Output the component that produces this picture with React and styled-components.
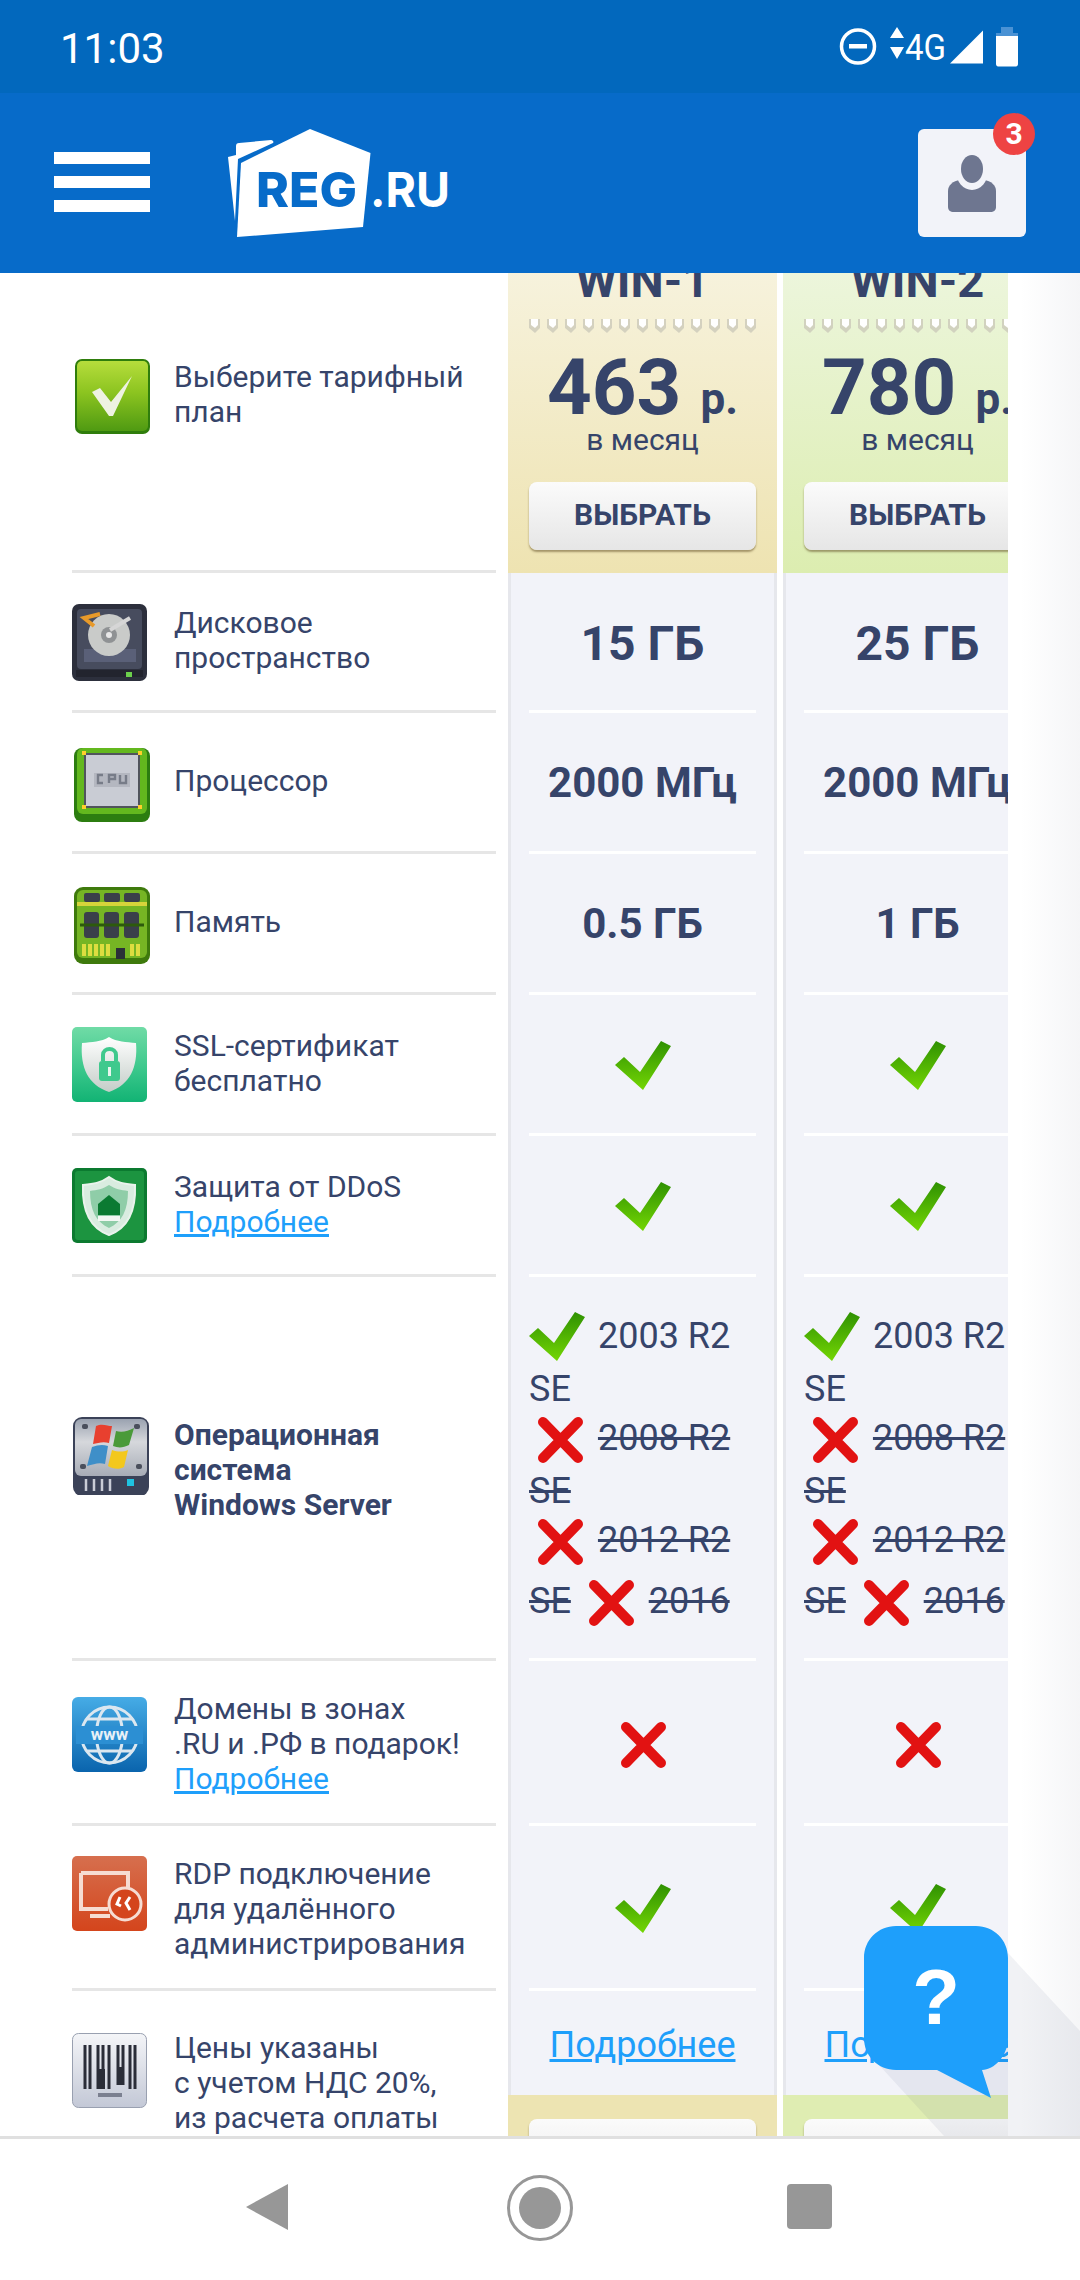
import React from "react";
import styled, { createGlobalStyle } from "styled-components";

const Global = createGlobalStyle`
  html, body { margin: 0; padding: 0; background: #fff; }
  body { font-family: Roboto, "Liberation Sans", sans-serif; color: #36446a; }
  * { box-sizing: border-box; }
`;

const Page = styled.div`
  width: 1080px;
  height: 2280px;
  display: flex;
  flex-direction: column;
  overflow: hidden;
`;

const StatusBar = styled.div`
  height: 93px;
  flex-shrink: 0;
  background: #0268bd;
  display: flex;
  align-items: center;
  padding: 0 60px 0 60px;
  color: #fff;
`;

const Clock = styled.div`
  font-size: 42px;
  line-height: 93px;
  padding-top: 3px;
  flex: 1;
`;

const StatusIcons = styled.svg`
  width: 182px;
  height: 42px;
  display: block;
  margin-top: -1px;
`;

const Header = styled.div`
  height: 180px;
  flex-shrink: 0;
  background: #076bc9;
  display: flex;
  align-items: center;
  padding: 0 54px;
  position: relative;
  z-index: 3;
`;

const Burger = styled.div`
  width: 96px;
  display: flex;
  flex-direction: column;
  gap: 12px;
  margin-top: -3px;
  margin-right: 78px;
  span {
    height: 12px;
    background: #fff;
  }
`;

const Logo = styled.svg`
  width: 224px;
  height: 112px;
  display: block;
`;

const ProfileButton = styled.div`
  width: 108px;
  height: 108px;
  margin-left: auto;
  background: #f2f3f9;
  border-radius: 6px;
  position: relative;
  display: flex;
  align-items: center;
  justify-content: center;
`;

const Badge = styled.div`
  position: absolute;
  top: -16px;
  right: -9px;
  width: 42px;
  height: 42px;
  border-radius: 50%;
  background: #ee4343;
  color: #fff;
  font-size: 30px;
  font-weight: 700;
  line-height: 42px;
  text-align: center;
`;

const Viewport = styled.div`
  flex: 1;
  position: relative;
  overflow: hidden;
  background: #fff;
`;

const Table = styled.div`
  width: 1008px;
  margin-top: -52px;
  padding-left: 72px;
  overflow: hidden;
`;

const Row = styled.div`
  display: flex;
  height: ${(p) => p.$h}px;
`;

const LabelCell = styled.div`
  width: 424px;
  flex-shrink: 0;
  margin-right: 6px;
  display: flex;
  align-items: ${(p) => (p.$top ? "flex-start" : "center")};
  padding-top: ${(p) => (p.$top ? "39px" : "0")};
  border-bottom: ${(p) => (p.$top ? "none" : "3px solid #e6e6e6")};
`;

const LabelBlock = styled.div`
  display: flex;
  align-items: flex-start;
  gap: 24px;
  margin-top: 3px;
`;

const IconBox = styled.div`
  width: 78px;
  height: 78px;
  flex-shrink: 0;
  margin-top: ${(p) => p.$drop || 0}px;
  svg {
    display: block;
    width: 78px;
    height: 78px;
  }
`;

const Label = styled.div`
  font-size: 30px;
  line-height: 35px;
  min-height: 72px;
  display: flex;
  flex-direction: column;
  justify-content: center;
  white-space: nowrap;
  font-weight: ${(p) => (p.$bold ? 700 : 400)};
`;

const LastLabel = styled(Label)`
  margin-top: -3px;
`;

const TextLink = styled.a`
  color: #1e9ffb;
  text-decoration: underline;
  font-size: ${(p) => (p.$big ? "36px" : "inherit")};
`;

const Plan = styled.div`
  width: 269px;
  flex-shrink: 0;
  margin-left: 6px;
  padding: 35px 21px 0;
  display: flex;
  flex-direction: column;
  align-items: center;
  background: ${(p) =>
    p.$tone === "green"
      ? "linear-gradient(#eff7e3, #dcedb0)"
      : "linear-gradient(#f8f5e4, #eee3b1)"};
`;

const PlanName = styled.div`
  font-size: 47px;
  line-height: 50px;
  font-weight: 700;
  white-space: nowrap;
`;

const Dots = styled.svg`
  display: block;
  width: 227px;
  height: 15px;
  margin-top: 12px;
  flex-shrink: 0;
`;

const Price = styled.div`
  margin-top: 17px;
  font-size: 78px;
  line-height: 76px;
  font-weight: 700;
  white-space: nowrap;
  small {
    font-size: 44px;
    line-height: 0;
  }
`;

const PerMonth = styled.div`
  font-size: 30px;
  line-height: 28px;
`;

const ChooseButton = styled.div`
  width: 227px;
  height: 68px;
  flex-shrink: 0;
  margin-top: ${(p) => p.$mt || 28}px;
  border-radius: 8px;
  background: linear-gradient(#fbfbfb, #e6e6e6);
  box-shadow: 0 2px 2px rgba(90, 70, 30, 0.5);
  font-size: 30px;
  font-weight: 700;
  line-height: 66px;
  text-align: center;
`;

const Cell = styled.div`
  width: 269px;
  flex-shrink: 0;
  margin-left: 6px;
  padding: 0 18px;
  background: #f2f3f9;
  border-left: 3px solid #e6e7ec;
  border-right: 3px solid #e6e7ec;
`;

const CellInner = styled.div`
  height: 100%;
  position: relative;
  display: flex;
  align-items: center;
  justify-content: center;
  border-bottom: 3px solid #e4e5ea;
  font-size: ${(p) => p.$size || 42}px;
  font-weight: 700;
  white-space: nowrap;
  padding-top: ${(p) => (p.$size ? "4px" : "0")};
  &::after {
    content: "";
    position: absolute;
    left: 0;
    right: 0;
    top: 100%;
    height: 3px;
    background: #fff;
    z-index: 1;
  }
  > svg {
    margin-top: 4px;
  }
`;

const OsCellInner = styled(CellInner)`
  display: block;
  white-space: normal;
  padding-top: 35px;
  font-size: 36px;
  font-weight: 400;
  line-height: 49px;
  > svg {
    margin: 0 4px 3px 0;
    vertical-align: -17px;
  }
`;

const MarkSvg = styled.svg`
  display: inline-block;
  width: 56px;
  height: 50px;
  vertical-align: -12px;
`;

const LastColumn = styled.div`
  width: 269px;
  flex-shrink: 0;
  margin-left: 6px;
  display: flex;
  flex-direction: column;
`;

const LastBody = styled.div`
  height: 104px;
  flex-shrink: 0;
  background: #f2f3f9;
  border-left: 3px solid #e6e7ec;
  border-right: 3px solid #e6e7ec;
  display: flex;
  align-items: center;
  justify-content: center;
  padding-top: 3px;
  white-space: nowrap;
`;

const LastFoot = styled.div`
  flex: 1;
  padding-left: 21px;
  background: ${(p) => (p.$tone === "green" ? "#dfedb2" : "#ede4b2")};
  overflow: hidden;
`;

const EdgeFade = styled.div`
  position: absolute;
  top: 0;
  bottom: 0;
  right: 0;
  width: 60px;
  background: linear-gradient(to right, rgba(60, 70, 100, 0), rgba(60, 70, 100, 0.05));
  pointer-events: none;
`;

const LongShadow = styled.svg`
  position: absolute;
  z-index: 2;
  left: 860px;
  top: 1660px;
  width: 220px;
  height: 203px;
  pointer-events: none;
`;

const HelpBubble = styled.div`
  position: absolute;
  z-index: 2;
  left: 864px;
  top: 1653px;
  width: 144px;
  height: 172px;
  svg {
    display: block;
    width: 144px;
    height: 172px;
  }
`;

const HelpMark = styled.span`
  position: absolute;
  left: 0;
  top: 28px;
  width: 144px;
  text-align: center;
  color: #fff;
  font-family: "Liberation Sans", Arial, sans-serif;
  font-size: 78px;
  font-weight: 700;
  line-height: 86px;
`;

const NavBar = styled.div`
  height: 144px;
  flex-shrink: 0;
  background: #fff;
  border-top: 3px solid #e0e0e0;
  display: flex;
  align-items: center;
  justify-content: center;
  gap: 206px;
  padding-bottom: 3px;
`;

const NavSlot = styled.svg`
  width: 66px;
  height: 66px;
  display: block;
`;

const Check = ({ id }) => (
  <MarkSvg viewBox="0 0 56 50">
    <defs>
      <linearGradient id={id} x1="0" y1="0" x2="0" y2="1">
        <stop offset="0" stopColor="#2f9102" />
        <stop offset="1" stopColor="#74d604" />
      </linearGradient>
    </defs>
    <path d="M0 24 L9 16 L25 31 L46 0 L56 5 L28 49 Z" fill={`url(#${id})`} />
  </MarkSvg>
);

const Cross = ({ className }) => (
  <MarkSvg className={className} viewBox="0 0 56 50">
    <path d="M14 8 L49 44 M49 8 L14 44" stroke="#e21212" strokeWidth="10" strokeLinecap="round" />
  </MarkSvg>
);

// the last cross of the OS list sits on a taller line
const LastCross = styled(Cross)`
  margin-top: 8px !important;
`;

const CellCross = styled(Cross)`
  margin-left: -6px;
`;

const DotStrip = ({ id }) => (
  <Dots viewBox="0 0 227 15">
    <defs>
      <pattern id={id} width="18" height="15" patternUnits="userSpaceOnUse">
        <path d="M0 1 H11 V10 L6 15 L0 10 Z" fill="#c9c7b8" opacity="0.75" />
        <path d="M2 1 H9 V7 L6 10 L2 7 Z" fill="#fff" />
      </pattern>
    </defs>
    <rect width="227" height="15" fill={`url(#${id})`} />
  </Dots>
);

const CheckIcon = () => (
  <svg viewBox="0 0 78 78">
    <defs>
      <linearGradient id="ic1" x1="0" y1="0" x2="0" y2="1">
        <stop offset="0" stopColor="#b6dd3c" />
        <stop offset="0.45" stopColor="#8cc420" />
        <stop offset="1" stopColor="#4f9a12" />
      </linearGradient>
    </defs>
    <rect x="3" y="1" width="75" height="75" rx="7" fill="#2f7d0c" />
    <rect x="5" y="3" width="71" height="70" rx="5" fill="url(#ic1)" />
    <path d="M20 34 L28 30 L39 44 L60 18 L41 58 L37 58 Z" fill="#eef2e2" />
  </svg>
);

const DiskIcon = () => (
  <svg viewBox="0 0 78 78">
    <rect x="0" y="0" width="75" height="77" rx="7" fill="#2c2f3c" />
    <rect x="5" y="5" width="65" height="60" rx="4" fill="#474c5e" />
    <path d="M12 45 H64 V58 H12 Z" fill="#5a6078" />
    <rect x="4" y="66" width="67" height="7" fill="#22242e" />
    <rect x="54" y="68" width="6" height="5" fill="#6cd04c" />
    <circle cx="37" cy="31" r="21" fill="#c9cbc9" />
    <circle cx="37" cy="31" r="8" fill="#8f9294" />
    <circle cx="37" cy="31" r="3" fill="#e8e8e8" />
    <path d="M38 26 L58 14" stroke="#d6d6d6" strokeWidth="4" />
    <path d="M28 10 L12 14 L22 22" stroke="#e89a2a" strokeWidth="4" fill="none" />
  </svg>
);

const CpuIcon = () => (
  <svg viewBox="0 0 78 78">
    <rect x="2" y="3" width="76" height="74" rx="8" fill="#2c7d10" />
    <rect x="5" y="3" width="70" height="66" rx="6" fill="#63b81e" />
    <rect x="12" y="8" width="56" height="55" rx="2" fill="#50545c" />
    <rect x="14" y="10" width="52" height="51" fill="#c9ccd4" />
    <rect x="22" y="28" width="36" height="14" fill="#b4b7c0" />
    <g fill="none" stroke="#777c88" strokeWidth="2.4">
      <path d="M31 30 H26 V38 H31" />
      <path d="M37 38 V30 H43 V34 H37" />
      <path d="M48 30 V38 H54 V30" />
    </g>
    <g fill="#ffcf2a">
      <rect x="10" y="6" width="4" height="4" />
      <rect x="66" y="6" width="4" height="4" />
      <rect x="10" y="60" width="4" height="4" />
      <rect x="66" y="60" width="4" height="4" />
    </g>
  </svg>
);

const RamIcon = () => (
  <svg viewBox="0 0 78 78">
    <rect x="2" y="1" width="76" height="77" rx="9" fill="#3e7a0c" />
    <rect x="5" y="4" width="70" height="68" rx="6" fill="#76b524" />
    <rect x="5" y="16" width="70" height="4" fill="#d7d43a" />
    <g fill="#3a3f4a">
      <rect x="12" y="7" width="16" height="9" rx="2" />
      <rect x="32" y="7" width="16" height="9" rx="2" />
      <rect x="52" y="7" width="16" height="9" rx="2" />
      <rect x="12" y="26" width="15" height="26" rx="3" />
      <rect x="32" y="26" width="15" height="26" rx="3" />
      <rect x="52" y="26" width="15" height="26" rx="3" />
    </g>
    <path d="M8 39 H72" stroke="#2d5a0c" strokeWidth="3" />
    <path d="M12 58 V70 M18 58 V70 M24 58 V70 M30 58 V70 M36 58 V70 M60 58 V70 M66 58 V70" stroke="#dddd40" strokeWidth="4" />
    <rect x="44" y="62" width="9" height="11" fill="#2b2f38" />
  </svg>
);

const SslIcon = () => (
  <svg viewBox="0 0 78 78">
    <defs>
      <linearGradient id="ic5" x1="0" y1="0" x2="0" y2="1">
        <stop offset="0" stopColor="#70dba6" />
        <stop offset="0.55" stopColor="#3cc88c" />
        <stop offset="1" stopColor="#12b374" />
      </linearGradient>
      <linearGradient id="ic5b" x1="0" y1="0" x2="0" y2="1">
        <stop offset="0" stopColor="#ffffff" />
        <stop offset="1" stopColor="#c4cdc8" />
      </linearGradient>
    </defs>
    <rect width="75" height="75" rx="5" fill="url(#ic5)" />
    <path d="M37 10 C45 15 54 15 64 16 C66 40 58 58 37 65 C16 58 8 40 10 16 C20 15 29 15 37 10 Z" fill="url(#ic5b)" />
    <rect x="27" y="34" width="21" height="20" rx="3" fill="#3fc98d" />
    <path d="M31 34 V28 C31 20 44 20 44 28 V34" fill="none" stroke="#3fc98d" strokeWidth="4" />
    <rect x="36" y="40" width="3" height="9" fill="#e8f5ee" />
  </svg>
);

const DdosIcon = () => (
  <svg viewBox="0 0 78 78">
    <rect width="75" height="75" rx="5" fill="#0c7a30" />
    <rect x="3" y="3" width="69" height="69" rx="3" fill="#1c9440" />
    <path d="M37 9 C45 15 53 16 63 17 C64 42 56 60 37 67 C18 60 10 42 11 17 C21 16 29 15 37 9 Z" fill="#d9ece0" stroke="#e9f3ec" strokeWidth="2" />
    <path d="M37 17 C43 21 49 22 56 23 C56 42 50 54 37 60 C24 54 18 42 18 23 C25 22 31 21 37 17 Z" fill="#8fcda8" />
    <path d="M37 27 L48 36 V47 H26 V36 Z" fill="#0b7a32" />
    <rect x="26" y="48" width="22" height="5" fill="#f2f7f3" />
  </svg>
);

const WindowsIcon = () => (
  <svg viewBox="0 0 78 78">
    <defs>
      <linearGradient id="ic7" x1="0" y1="0" x2="0" y2="1">
        <stop offset="0" stopColor="#9aa2b0" />
        <stop offset="0.4" stopColor="#d6d8dc" />
        <stop offset="1" stopColor="#a7acb6" />
      </linearGradient>
    </defs>
    <rect x="1" y="0" width="76" height="79" rx="9" fill="#3b4258" />
    <rect x="3" y="2" width="72" height="57" rx="6" fill="url(#ic7)" />
    <path d="M24 9 C30 6 36 9 40 9 L37 26 C31 24 26 26 21 27 Z" fill="#e8402f" />
    <path d="M44 14 C50 16 56 14 62 11 L57 28 C51 31 46 31 41 29 Z" fill="#4a9a3a" />
    <path d="M20 30 C26 28 30 27 36 29 L33 47 C27 45 22 47 15 49 Z" fill="#3f8fc8" />
    <path d="M40 33 C46 35 51 35 56 33 L52 50 C47 53 41 52 36 49 Z" fill="#f3c81d" />
    <g fill="#4a4f5c">
      <rect x="10" y="7" width="6" height="5" rx="2" />
      <rect x="62" y="7" width="6" height="5" rx="2" />
      <rect x="8" y="47" width="6" height="5" rx="2" />
      <rect x="64" y="47" width="6" height="5" rx="2" />
    </g>
    <path d="M14 62 V74 M22 62 V74 M30 62 V74 M38 62 V74" stroke="#c9ccd6" strokeWidth="2.5" />
    <rect x="55" y="62" width="7" height="7" fill="#1fc3e0" />
  </svg>
);

const GlobeIcon = () => (
  <svg viewBox="0 0 78 78">
    <defs>
      <linearGradient id="ic8" x1="0" y1="0" x2="0" y2="1">
        <stop offset="0" stopColor="#46ace6" />
        <stop offset="1" stopColor="#0a64ad" />
      </linearGradient>
    </defs>
    <rect width="75" height="75" rx="6" fill="url(#ic8)" />
    <g fill="none" stroke="#dbe7f0" strokeWidth="3">
      <circle cx="37.5" cy="38" r="28" />
      <ellipse cx="37.5" cy="38" rx="13" ry="28" />
      <path d="M14 22 H61 M14 54 H61" />
    </g>
    <rect x="4" y="29" width="67" height="18" fill="#2c8fd3" />
    <text x="37.5" y="43" textAnchor="middle" fontFamily="Roboto, sans-serif" fontSize="17" fontWeight="700" fill="#e8f1f7">www</text>
  </svg>
);

const RdpIcon = () => (
  <svg viewBox="0 0 78 78">
    <defs>
      <linearGradient id="ic9" x1="0" y1="0" x2="0" y2="1">
        <stop offset="0" stopColor="#d66f4e" />
        <stop offset="1" stopColor="#d4451c" />
      </linearGradient>
    </defs>
    <rect width="75" height="75" rx="5" fill="url(#ic9)" />
    <path d="M9 17 H56 V34 M26 53 H9 V17 M36 53 H26 M18 60 H38" fill="none" stroke="#f6dcd2" strokeWidth="4" />
    <circle cx="53" cy="48" r="16" fill="#d4451c" stroke="#f6dcd2" strokeWidth="3" />
    <path d="M48 41 L45 48 L49 50 M58 41 L54 47 L58 54" fill="none" stroke="#fff" strokeWidth="3" />
  </svg>
);

const BarcodeIcon = () => (
  <svg viewBox="0 0 78 78">
    <defs>
      <linearGradient id="ic10" x1="0" y1="0" x2="0" y2="1">
        <stop offset="0" stopColor="#f4f5f8" />
        <stop offset="1" stopColor="#c3c8d6" />
      </linearGradient>
    </defs>
    <rect x="0.5" y="0.5" width="74" height="74" rx="6" fill="url(#ic10)" stroke="#99a0b0" />
    <path d="M13 12 V56 M18 12 V56 M26 12 V56 M31 12 V56 M37 12 V56 M46 12 V52 M51 12 V52 M58 12 V56 M63 12 V56" stroke="#2a2d38" strokeWidth="3" />
    <rect x="27" y="36" width="6" height="20" fill="#2a2d38" />
    <rect x="45" y="34" width="7" height="18" fill="#2a2d38" />
    <rect x="26" y="60" width="24" height="4" fill="#7b8090" />
  </svg>
);

const rows = [
  { h: 140, size: 48, icon: <DiskIcon />, label: <><span>Дисковое</span><span>пространство</span></>, a: "15 ГБ", b: "25 ГБ" },
  { h: 141, icon: <CpuIcon />, label: "Процессор", a: "2000 МГц", b: "2000 МГц" },
  { h: 141, icon: <RamIcon />, label: "Память", a: "0.5 ГБ", b: "1 ГБ" },
  { h: 141, icon: <SslIcon />, label: <><span>SSL-сертификат</span><span>бесплатно</span></>, check: true },
  { h: 141, icon: <DdosIcon />, label: <><span>Защита от DDoS</span><span><TextLink>Подробнее</TextLink></span></>, check: true },
];

const OsList = ({ id }) => (
  <OsCellInner>
    <Check id={id} /> 2003 R2 SE
    <br />
    <Cross /> <s>2008 R2 SE</s>
    <br />
    <Cross /> <s>2012 R2 SE</s> <LastCross /> <s>2016</s>
  </OsCellInner>
);

const LabelContent = ({ icon, drop, children }) => (
  <LabelBlock>
    <IconBox $drop={drop}>{icon}</IconBox>
    {children}
  </LabelBlock>
);

export default function App() {
  return (
    <Page>
      <Global />
      <StatusBar>
        <Clock>11:03</Clock>
        <StatusIcons viewBox="0 0 182 42">
          <circle cx="20" cy="21.5" r="16.5" fill="none" stroke="#fff" strokeWidth="3.5" />
          <rect x="11" y="19" width="18" height="4.5" fill="#fff" />
          <path d="M52 13 L59 2 L66 13 Z M52 22 H66 L59 34 Z" fill="#fff" />
          <text x="67" y="34.5" fontFamily="Roboto, sans-serif" fontSize="37" fill="#fff" textLength="41" lengthAdjust="spacingAndGlyphs">4G</text>
          <path d="M112 38.5 L145 5.5 V38.5 Z" fill="#fff" />
          <path d="M163 2 H175 V8 H180 V14 H158 V8 H163 Z" fill="#4a92d4" />
          <path d="M158 11 H180 V39 C180 40.5 179 41.5 178 41.5 H160 C159 41.5 158 40.5 158 39 Z" fill="#fff" />
        </StatusIcons>
      </StatusBar>
      <Header>
        <Burger>
          <span />
          <span />
          <span />
        </Burger>
        <Logo viewBox="0 0 224 112">
          <path d="M0 30 L8 28 V19 C8 17 9 16 11 16 L43 13 C45 13 46 15 45 16 L10 32 L7 94 Z" fill="#fff" />
          <path d="M82 2 L142.5 26 L135 100 L9 110 L13 36 Z" fill="#fff" />
          <text x="28" y="80" fontFamily="Inter, Roboto, sans-serif" fontSize="48" fontWeight="800" fill="#076bc9" textLength="101" lengthAdjust="spacingAndGlyphs">REG</text>
          <text x="142" y="80" fontFamily="Inter, Roboto, sans-serif" fontSize="48" fontWeight="700" fill="#fff" textLength="80" lengthAdjust="spacingAndGlyphs">.RU</text>
        </Logo>
        <ProfileButton>
          <Badge>3</Badge>
          <svg width="48" height="57" viewBox="0 0 48 57">
            <path d="M6 57 C2 57 0 55 0 52 V36 C0 30 5 26 12 25 H36 C43 26 48 30 48 36 V52 C48 55 46 57 42 57 Z" fill="#6e7690" />
            <ellipse cx="24" cy="16" rx="16" ry="19" fill="#f2f3f9" />
            <ellipse cx="24" cy="14" rx="11" ry="14" fill="#6e7690" />
          </svg>
        </ProfileButton>
      </Header>
      <Viewport>
        <Table>
          <Row $h={352}>
            <LabelCell>
              <LabelContent icon={<CheckIcon />}>
                <Label><span>Выберите тарифный</span><span>план</span></Label>
              </LabelContent>
            </LabelCell>
            <Plan>
              <PlanName>WIN-1</PlanName>
              <DotStrip id="dotsA" />
              <Price>463 <small>р.</small></Price>
              <PerMonth>в месяц</PerMonth>
              <ChooseButton>ВЫБРАТЬ</ChooseButton>
            </Plan>
            <Plan $tone="green">
              <PlanName>WIN-2</PlanName>
              <DotStrip id="dotsB" />
              <Price>780 <small>р.</small></Price>
              <PerMonth>в месяц</PerMonth>
              <ChooseButton>ВЫБРАТЬ</ChooseButton>
            </Plan>
          </Row>
          {rows.map((r, i) => (
            <Row $h={r.h} key={i}>
              <LabelCell>
                <LabelContent icon={r.icon}>
                  <Label>{r.label}</Label>
                </LabelContent>
              </LabelCell>
              <Cell><CellInner $size={r.size}>{r.check ? <Check id={`ra${i}`} /> : r.a}</CellInner></Cell>
              <Cell><CellInner $size={r.size}>{r.check ? <Check id={`rb${i}`} /> : r.b}</CellInner></Cell>
            </Row>
          ))}
          <Row $h={384}>
            <LabelCell>
              <LabelContent icon={<WindowsIcon />}>
                <Label $bold><span>Операционная</span><span>система</span><span>Windows Server</span></Label>
              </LabelContent>
            </LabelCell>
            <Cell><OsList id="osA" /></Cell>
            <Cell><OsList id="osB" /></Cell>
          </Row>
          <Row $h={165}>
            <LabelCell>
              <LabelContent icon={<GlobeIcon />} drop={6}>
                <Label><span>Домены в зонах</span><span>.RU и .РФ в подарок!</span><span><TextLink>Подробнее</TextLink></span></Label>
              </LabelContent>
            </LabelCell>
            <Cell><CellInner><CellCross /></CellInner></Cell>
            <Cell><CellInner><CellCross /></CellInner></Cell>
          </Row>
          <Row $h={165}>
            <LabelCell>
              <LabelContent icon={<RdpIcon />}>
                <Label><span>RDP подключение</span><span>для удалённого</span><span>администрирования</span></Label>
              </LabelContent>
            </LabelCell>
            <Cell><CellInner><Check id="rdpA" /></CellInner></Cell>
            <Cell><CellInner><Check id="rdpB" /></CellInner></Cell>
          </Row>
          <Row $h={160}>
            <LabelCell $top>
              <LabelContent icon={<BarcodeIcon />}>
                <LastLabel><span>Цены указаны</span><span>с учетом НДС 20%,</span><span>из расчета оплаты</span></LastLabel>
              </LabelContent>
            </LabelCell>
            <LastColumn>
              <LastBody><TextLink $big>Подробнее</TextLink></LastBody>
              <LastFoot><ChooseButton $mt={24} /></LastFoot>
            </LastColumn>
            <LastColumn>
              <LastBody><TextLink $big>Подробнее</TextLink></LastBody>
              <LastFoot $tone="green"><ChooseButton $mt={24} /></LastFoot>
            </LastColumn>
          </Row>
        </Table>
        <EdgeFade />
        <LongShadow viewBox="0 0 220 203">
          <path d="M148 20 L220 98 V203 H84 L8 120 Z" fill="#3c466e" opacity="0.07" />
        </LongShadow>
        <HelpBubble>
          <svg viewBox="0 0 144 172">
            <path d="M32 0 H112 C130 0 144 14 144 32 V112 C144 130 130 144 118 144 L127 172 L73 144 H32 C14 144 0 130 0 112 V32 C0 14 14 0 32 0 Z" fill="#1e9ffb" />
          </svg>
          <HelpMark>?</HelpMark>
        </HelpBubble>
      </Viewport>
      <NavBar>
        <NavSlot viewBox="0 0 66 66">
          <path d="M53 9 V55 L11 32 Z" fill="#979797" />
        </NavSlot>
        <NavSlot viewBox="0 0 66 66">
          <circle cx="33" cy="33" r="31.5" fill="none" stroke="#979797" strokeWidth="3" />
          <circle cx="33" cy="33" r="21" fill="#979797" />
        </NavSlot>
        <NavSlot viewBox="0 0 66 66">
          <rect x="8" y="9" width="45" height="45" rx="4" fill="#979797" />
        </NavSlot>
      </NavBar>
    </Page>
  );
}
